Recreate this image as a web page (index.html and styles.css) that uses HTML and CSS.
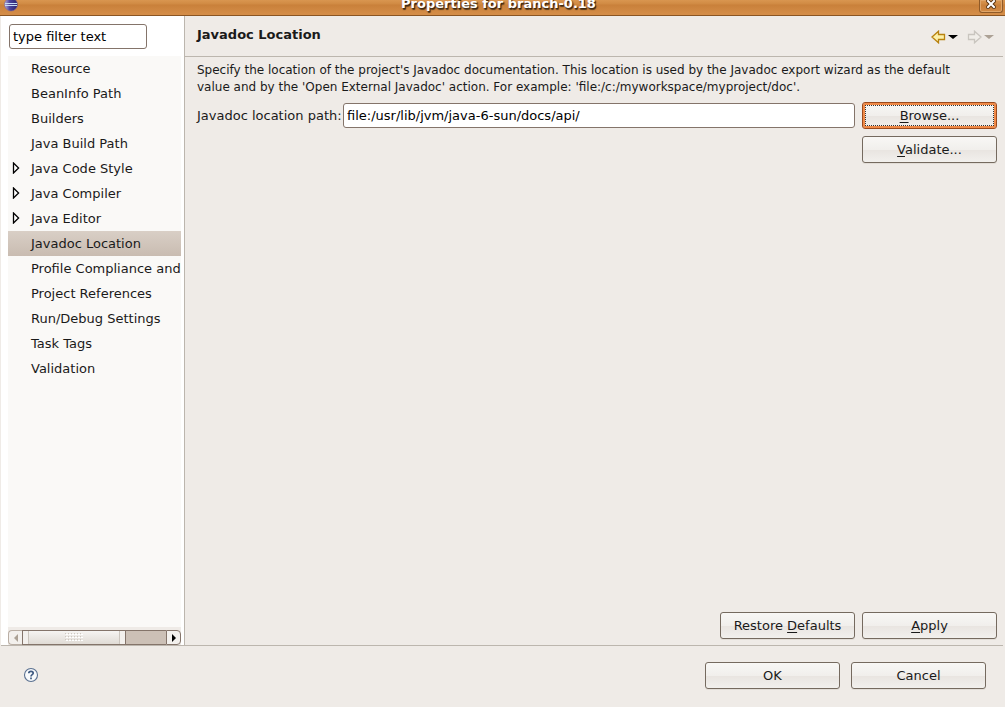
FILE: index.html
```html
<!DOCTYPE html>
<html lang="en">
<head>
    <meta charset="UTF-8">
    <meta name="viewport" content="width=device-width, initial-scale=1.0">
    <title>Properties for branch-0.18</title>
    <link rel="stylesheet" href="styles.css">
</head>
<body>
    <header class="titlebar">
        <svg class="app-icon" width="14" height="14" viewBox="0 0 14 14">
            <defs>
                <linearGradient id="globe" x1="0" y1="0" x2="1" y2="0">
                    <stop offset="0" stop-color="#b9aedb"/>
                    <stop offset="0.4" stop-color="#4b429c"/>
                    <stop offset="1" stop-color="#29256f"/>
                </linearGradient>
            </defs>
            <circle cx="7" cy="6.5" r="6.5" fill="url(#globe)" stroke="#7b6699" stroke-width="0.6"/>
            <path d="M1 7.5h12M1 5.5h12" stroke="#c3dcf5"/>
        </svg>
        <span class="title">Properties for branch-0.18</span>
        <button class="close-btn" aria-label="Close">
            <svg width="10" height="10" viewBox="0 0 10 10">
                <path d="M2 2l6 6M8 2l-6 6" stroke="#5a3410" stroke-width="4" stroke-linecap="square"/>
                <path d="M2 2l6 6M8 2l-6 6" stroke="#fff" stroke-width="2" stroke-linecap="square"/>
            </svg>
        </button>
    </header>

    <div class="content">
        <aside class="sidebar">
            <input class="text-box filter" type="text" aria-label="Filter" value="type filter text">
            <ul class="tree">
                <li><button class="item">Resource</button></li>
                <li><button class="item">BeanInfo Path</button></li>
                <li><button class="item">Builders</button></li>
                <li><button class="item">Java Build Path</button></li>
                <li><button class="item"><svg class="expander" width="8" height="12" viewBox="0 0 8 12"><path d="M1.5 1v10L6.6 6z"/></svg>Java Code Style</button></li>
                <li><button class="item"><svg class="expander" width="8" height="12" viewBox="0 0 8 12"><path d="M1.5 1v10L6.6 6z"/></svg>Java Compiler</button></li>
                <li><button class="item"><svg class="expander" width="8" height="12" viewBox="0 0 8 12"><path d="M1.5 1v10L6.6 6z"/></svg>Java Editor</button></li>
                <li><button class="item selected">Javadoc Location</button></li>
                <li><button class="item">Profile Compliance and</button></li>
                <li><button class="item">Project References</button></li>
                <li><button class="item">Run/Debug Settings</button></li>
                <li><button class="item">Task Tags</button></li>
                <li><button class="item">Validation</button></li>
            </ul>
            <div class="scrollbar">
                <button class="scroll-btn left" aria-label="Scroll left">
                    <svg width="4" height="8" viewBox="0 0 4 8"><path d="M4 0v8L0 4z" fill="#aca195"/></svg>
                </button>
                <div class="track">
                    <div class="thumb">
                        <svg width="18" height="9" viewBox="0 0 18 9">
                            <path d="M0 .5h18M0 3.5h18M0 6.5h18" stroke="#cdc7c0" stroke-dasharray="1 2"/>
                            <path d="M1 1.5h17M1 4.5h17M1 7.5h17" stroke="#fff" stroke-dasharray="2 1"/>
                        </svg>
                    </div>
                </div>
                <button class="scroll-btn right" aria-label="Scroll right">
                    <svg width="4" height="8" viewBox="0 0 4 8"><path d="M0 0v8L4 4z"/></svg>
                </button>
            </div>
        </aside>

        <main class="page">
            <div class="page-header">
                <h1>Javadoc Location</h1>
                <div class="history">
                    <button class="nav-btn" aria-label="Back">
                        <svg width="27" height="14" viewBox="0 0 27 14">
                            <path d="M1 7L7.5 1.2V4.5h6v5h-6v3.3z" fill="#fdf0a8" stroke="#b8820f" stroke-width="1.3"/>
                            <path d="M17 5h10l-5 4z"/>
                        </svg>
                    </button>
                    <button class="nav-btn" aria-label="Forward" disabled>
                        <svg width="27" height="14" viewBox="0 0 27 14">
                            <path d="M14 7L7.5 1.2V4.5h-6v5h6v3.3z" fill="#f1eee9" stroke="#c9c5bf" stroke-width="1.3"/>
                            <path d="M17 5h10l-5 4z" fill="#aca195"/>
                        </svg>
                    </button>
                </div>
            </div>
            <div class="page-body">
                <p class="description">Specify the location of the project's Javadoc documentation. This location is used by the Javadoc export wizard as the default<br>value and by the 'Open External Javadoc' action. For example: 'file:/c:/myworkspace/myproject/doc'.</p>
                <div class="form">
                    <label for="path">Javadoc location path:</label>
                    <input class="text-box" id="path" type="text" value="file:/usr/lib/jvm/java-6-sun/docs/api/">
                    <button class="btn focused"><span><u>B</u>rowse...</span></button>
                    <button class="btn validate"><span><u>V</u>alidate...</span></button>
                </div>
                <div class="page-actions">
                    <button class="btn"><span>Restore <u>D</u>efaults</span></button>
                    <button class="btn"><span><u>A</u>pply</span></button>
                </div>
            </div>
        </main>
    </div>

    <footer class="footer">
        <button class="help-btn" aria-label="Help">
            <svg width="16" height="16" viewBox="0 0 16 16">
                <circle cx="8" cy="8" r="6.5" fill="#f8fafc" stroke="#5a7090" stroke-width="1.1"/>
                <path d="M5.8 6.3C5.8 3.6 10.2 3.7 10.2 6.2 10.2 7.7 8 7.6 8 9.5M8 10.6v1.6" fill="none" stroke="#3f5a82" stroke-width="1.7"/>
            </svg>
        </button>
        <div class="dialog-actions">
            <button class="btn">OK</button>
            <button class="btn">Cancel</button>
        </div>
    </footer>
</body>
</html>
```
FILE: styles.css
```css
*{
    margin: 0;
    padding: 0;
    box-sizing: border-box;
}
body{
    display: flex;
    flex-direction: column;
    min-height: 100vh;
    background: #efebe7;
    color: #1a1a1a;
    font-family: "DejaVu Sans", sans-serif;
    font-size: 13px;
    line-height: 17px;
}
button, input{
    font: inherit;
    color: inherit;
}
button{
    border: none;
    background: none;
}
svg{
    display: block;
}

/* title bar */
.titlebar{
    display: flex;
    align-items: flex-start;
    justify-content: space-between;
    height: 16px;
    padding: 0 2px 0 4px;
    overflow: hidden;
    background: linear-gradient(#d99650, #d08a43 4px, #c9803a 5px, #d48d48 14px);
    border-bottom: 1px solid #8a5523;
}
.app-icon{
    margin-top: -2px;
}
.title{
    color: #fff;
    font-weight: bold;
    line-height: 8px;
    text-shadow: 1px 1px 1px #3a2410, 1px 2px 1px #5a3c1c;
}
.close-btn{
    display: flex;
    align-items: flex-end;
    justify-content: center;
    width: 24px;
    height: 13px;
    padding-bottom: 3px;
    border: 1px solid #8f5a28;
    border-top: none;
    border-radius: 0 0 3px 3px;
    box-shadow: inset 0 0 0 1px #dfa568;
}

/* property list */
.content{
    display: flex;
    flex: 1;
    margin: 0 2px 0 1px;
    border-bottom: 1px solid #bcb6ae;
}
.sidebar{
    display: flex;
    flex-direction: column;
    width: 184px;
    padding: 8px 3px 0 7px;
    background: #fff;
    border-right: 1px solid #bcb6ae;
}
.text-box{
    min-width: 0;
    height: 25px;
    padding: 0 3px;
    background: #fff;
    color: #000;
    border: 1px solid #84746a;
    border-radius: 3px;
    outline: none;
}
.filter{
    width: 138px;
    margin: 0 0 7px 1px;
}
.tree{
    flex: 1;
    list-style: none;
    overflow: hidden;
    background: #faf9f7;
}
.item{
    display: flex;
    align-items: center;
    position: relative;
    width: 100%;
    height: 25px;
    padding-left: 23px;
    white-space: nowrap;
}
.item.selected{
    background: linear-gradient(#d9cfc6, #c9bcb1);
}
.expander{
    position: absolute;
    left: 4px;
    top: 6px;
    fill: #fff;
    stroke: #000;
    stroke-width: 1.3;
}
.scrollbar{
    display: flex;
    height: 18px;
    padding-top: 3px;
    background: #efebe7;
}
.scroll-btn{
    display: flex;
    align-items: center;
    justify-content: center;
    width: 15px;
    background: #f3f0ed;
    border: 1px solid #84746a;
}
.scroll-btn.left{
    width: 14px;
    border-color: #b9aea4;
    border-right: none;
    border-radius: 4px 0 0 4px;
}
.scroll-btn.right{
    border-radius: 0 4px 4px 0;
}
.track{
    flex: 1;
    background: #ccc0b6;
    border: 1px solid #84746a;
    border-width: 1px 0;
}
.thumb{
    display: flex;
    align-items: center;
    justify-content: center;
    width: 72%;
    height: 100%;
    background: linear-gradient(#f6f4f2, #e0dbd5);
    border: 1px solid #84746a;
    border-width: 0 1px;
    box-shadow: inset 5px 0 #f3f0ed, inset 6px 0 #cbc5be, inset -5px 0 #f3f0ed, inset -6px 0 #cbc5be;
}

/* page */
.page{
    display: flex;
    flex: 1;
    flex-direction: column;
}
.page-header{
    display: flex;
    align-items: center;
    justify-content: space-between;
    height: 41px;
    padding: 0 9px 4px 12px;
    border-bottom: 1px solid #bcb6ae;
}
.page-header h1{
    font-size: 13px;
}
.history{
    display: flex;
    gap: 9px;
    padding-top: 6px;
}
.page-body{
    display: flex;
    flex: 1;
    flex-direction: column;
    padding: 5px 6px 6px 12px;
}
.description{
    font-size: 12px;
}
.form{
    display: grid;
    grid-template-columns: 139px 1fr 135px;
    align-items: center;
    gap: 7px;
    margin-top: 6px;
    white-space: nowrap;
}
.validate{
    grid-column: 3;
}
.btn{
    width: 135px;
    height: 27px;
    background: linear-gradient(#f8f7f5, #f1efec 50%, #e9e5e1 54%, #f2f0ed);
    border: 1px solid #756a5f;
    border-radius: 3px;
    box-shadow: 0 1px #e2ddd7;
}
.btn u{
    text-underline-offset: 2px;
}
.btn.focused{
    padding: 0;
    border-color: #9c4a1c;
    box-shadow: inset 0 0 0 2px #f08a48;
}
.btn.focused span{
    display: block;
    height: 21px;
    margin: 0 2px;
    line-height: 19px;
    border: 1px dotted #333;
}
.page-actions{
    display: flex;
    justify-content: flex-end;
    gap: 7px;
    margin-top: auto;
}

/* dialog buttons */
.footer{
    display: flex;
    align-items: center;
    justify-content: space-between;
    height: 61px;
    padding: 0 19px 3px 23px;
}
.dialog-actions{
    display: flex;
    gap: 11px;
}
```
